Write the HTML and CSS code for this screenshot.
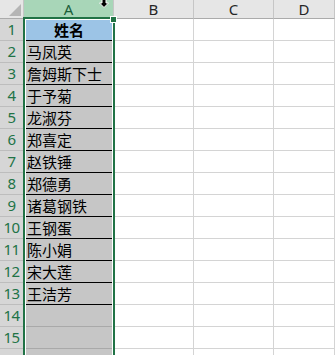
FILE: index.html
```html
<!DOCTYPE html>
<html lang="zh">
<head>
    <meta charset="UTF-8">
    <title>姓名</title>
    <link rel="stylesheet" href="styles.css">
</head>
<body>
    <div class="sheet">
        <div class="grid">
            <div class="corner"><span class="tri"></span></div>
            <div class="col-head active">A</div>
            <div class="col-head">B</div>
            <div class="col-head">C</div>
            <div class="col-head">D</div>

            <div class="row-head">1</div><div class="cell a title">姓名</div><div class="cell"></div><div class="cell"></div><div class="cell"></div>
            <div class="row-head">2</div><div class="cell a data">马凤英</div><div class="cell"></div><div class="cell"></div><div class="cell"></div>
            <div class="row-head">3</div><div class="cell a data">詹姆斯下士</div><div class="cell"></div><div class="cell"></div><div class="cell"></div>
            <div class="row-head">4</div><div class="cell a data">于予菊</div><div class="cell"></div><div class="cell"></div><div class="cell"></div>
            <div class="row-head">5</div><div class="cell a data">龙淑芬</div><div class="cell"></div><div class="cell"></div><div class="cell"></div>
            <div class="row-head">6</div><div class="cell a data">郑喜定</div><div class="cell"></div><div class="cell"></div><div class="cell"></div>
            <div class="row-head">7</div><div class="cell a data">赵铁锤</div><div class="cell"></div><div class="cell"></div><div class="cell"></div>
            <div class="row-head">8</div><div class="cell a data">郑德勇</div><div class="cell"></div><div class="cell"></div><div class="cell"></div>
            <div class="row-head">9</div><div class="cell a data">诸葛钢铁</div><div class="cell"></div><div class="cell"></div><div class="cell"></div>
            <div class="row-head">10</div><div class="cell a data">王钢蛋</div><div class="cell"></div><div class="cell"></div><div class="cell"></div>
            <div class="row-head">11</div><div class="cell a data">陈小娟</div><div class="cell"></div><div class="cell"></div><div class="cell"></div>
            <div class="row-head">12</div><div class="cell a data">宋大莲</div><div class="cell"></div><div class="cell"></div><div class="cell"></div>
            <div class="row-head">13</div><div class="cell a data">王洁芳</div><div class="cell"></div><div class="cell"></div><div class="cell"></div>
            <div class="row-head">14</div><div class="cell a"></div><div class="cell"></div><div class="cell"></div><div class="cell"></div>
            <div class="row-head">15</div><div class="cell a"></div><div class="cell"></div><div class="cell"></div><div class="cell"></div>
            <div class="row-head">16</div><div class="cell a"></div><div class="cell"></div><div class="cell"></div><div class="cell"></div>
        </div>

        <!-- selection frame around column A -->
        <div class="selection"><span class="handle"></span></div>

        <!-- column-select cursor -->
        <svg class="cursor" width="10" height="9" viewBox="0 0 10 9">
            <path d="M3 0.5 H7 V4 H9.5 L5 8.5 L0.5 4 H3 Z" fill="#000" stroke="#fff" stroke-width="1"/>
        </svg>
    </div>
</body>
</html>
```

FILE: styles.css
```css
body {
    margin: 0;
    background-color: #fff;
    font-family: "Noto Sans", "Noto Sans CJK SC", sans-serif;
    overflow: hidden;
}

.sheet {
    position: relative;
    height: 355px;
    overflow: hidden;
}

.grid {
    display: grid;
    grid-template-columns: 24px 90px 80px 80px 1fr;
    grid-template-rows: 19px;
    grid-auto-rows: 22px;
}

.corner {
    position: relative;
    background-color: #e6e6e6;
    border-right: 1px solid #c6c6c6;
    border-bottom: 1px solid #ababab;
}

.tri {
    position: absolute;
    right: 2px;
    bottom: 2px;
    width: 0;
    height: 0;
    border-left: 12px solid transparent;
    border-bottom: 12px solid #b5b5b5;
}

.col-head {
    background-color: #e6e6e6;
    border-right: 1px solid #c6c6c6;
    border-bottom: 1px solid #ababab;
    color: #262626;
    font-size: 15px;
    line-height: 18px;
    text-align: center;
}

.col-head.active {
    background-color: #a8d6b8;
    color: #1b5e3a;
}

.row-head {
    background-color: #d6d6d6;
    border-right: 1px solid #c6c6c6;
    border-bottom: 1px solid #bdbdbd;
    color: #217346;
    font-size: 15px;
    line-height: 21px;
    text-align: center;
    letter-spacing: -0.5px;
}

.cell {
    border-right: 1px solid #d4d4d4;
    border-bottom: 1px solid #d4d4d4;
}

.cell.a {
    background-color: #c6c6c6;
    border-bottom-color: #a9a9a9;
    border-right: none;
    margin-left: 2px;
    margin-right: 2px;
}

.cell.title,
.cell.data {
    border-bottom: 1px solid #000;
    font-family: "Noto Sans CJK SC", sans-serif;
    font-size: 15px;
    line-height: 21px;
    color: #000;
    white-space: nowrap;
}

.cell.title {
    background-color: #9cc4e6;
    font-weight: bold;
    text-align: center;
}

.cell.data {
    padding-left: 1px;
}

.selection {
    position: absolute;
    left: 23px;
    top: 17px;
    width: 92px;
    height: 360px;
    box-sizing: border-box;
    border: 2px solid #217346;
    box-shadow: inset 0 0 0 1px #fff;
}

.handle {
    position: absolute;
    right: -4px;
    top: -3px;
    width: 5px;
    height: 5px;
    background-color: #217346;
    border: 1px solid #fff;
}

.cursor {
    position: absolute;
    left: 99px;
    top: -1px;
}
```
